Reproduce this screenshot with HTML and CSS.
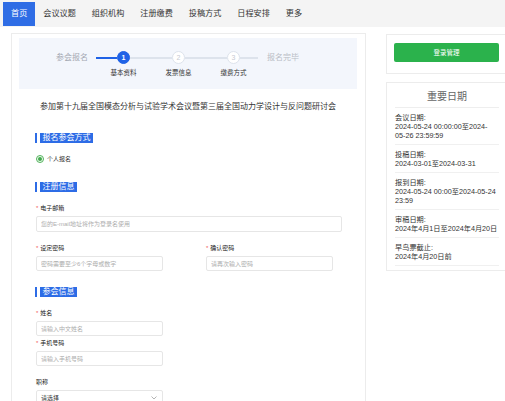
FILE: index.html
```html
<!DOCTYPE html>
<html lang="zh-CN">
<head>
    <meta charset="UTF-8">
    <meta name="viewport" content="width=device-width, initial-scale=1.0">
    <title>会议报名</title>
    <link rel="stylesheet" href="styles.css">
</head>
<body>
    <nav class="topnav">
        <a class="nav-item active" href="#">首页</a>
        <a class="nav-item" href="#">会议议题</a>
        <a class="nav-item" href="#">组织机构</a>
        <a class="nav-item" href="#">注册缴费</a>
        <a class="nav-item" href="#">投稿方式</a>
        <a class="nav-item" href="#">日程安排</a>
        <a class="nav-item" href="#">更多</a>
    </nav>

    <div class="page">
        <div class="main-card">
            <div class="steps">
                <div class="steps-track">
                    <span class="step-text">参会报名</span>
                    <span class="step-line done first"></span>
                    <span class="step-node active">1<span class="step-label">基本资料</span></span>
                    <span class="step-line mid"></span>
                    <span class="step-node">2<span class="step-label">发票信息</span></span>
                    <span class="step-line mid"></span>
                    <span class="step-node">3<span class="step-label">缴费方式</span></span>
                    <span class="step-line last"></span>
                    <span class="step-text end">报名完毕</span>
                </div>
            </div>

            <h1 class="conf-title">参加第十九届全国模态分析与试验学术会议暨第三届全国动力学设计与反问题研讨会</h1>

            <div class="form-body">
                <div class="sec-head"><span>报名参会方式</span></div>
                <label class="radio"><span class="radio-dot"></span>个人报名</label>

                <div class="sec-head sec-second"><span>注册信息</span></div>
                <div class="field first">
                    <div class="field-label"><i>*</i>电子邮箱</div>
                    <input class="text-input big" type="text" placeholder="您的E-mail地址将作为登录名使用">
                </div>
                <div class="field-row">
                    <div class="field">
                        <div class="field-label"><i>*</i>设定密码</div>
                        <input class="text-input short" type="password" placeholder="密码需要至少6个字母或数字">
                    </div>
                    <div class="field">
                        <div class="field-label"><i>*</i>确认密码</div>
                        <input class="text-input short" type="password" placeholder="请再次输入密码">
                    </div>
                </div>

                <div class="sec-head sec-third"><span>参会信息</span></div>
                <div class="field first">
                    <div class="field-label"><i>*</i>姓名</div>
                    <input class="text-input short" type="text" placeholder="请输入中文姓名">
                </div>
                <div class="field tight">
                    <div class="field-label"><i>*</i>手机号码</div>
                    <input class="text-input short" type="text" placeholder="请输入手机号码">
                </div>
                <div class="field first">
                    <div class="field-label">职称</div>
                    <div class="select-box">
                        <span>请选择</span>
                        <svg width="6" height="4" viewBox="0 0 6 4"><path d="M0.5 0.5 L3 3 L5.5 0.5" fill="none" stroke="#b4b4b4" stroke-width="1"/></svg>
                    </div>
                </div>
            </div>
        </div>

        <aside class="sidebar">
            <div class="side-card login-card">
                <a class="login-btn" href="#">登录管理</a>
            </div>
            <div class="side-card dates-card">
                <div class="dates-title">重要日期</div>
                <div class="date-item">
                    <div>会议日期:</div>
                    <div><span class="nowrap">2024-05-24</span> 00:00:00至2024-<wbr><span class="nowrap">05-26</span> 23:59:59</div>
                </div>
                <div class="date-item">
                    <div>投稿日期:</div>
                    <div>2024-03-01至2024-03-31</div>
                </div>
                <div class="date-item">
                    <div>报到日期:</div>
                    <div>2024-05-24 00:00至<span class="nowrap">2024-05-24</span> 23:59</div>
                </div>
                <div class="date-item">
                    <div>审稿日期:</div>
                    <div class="nowrap">2024年4月1日至2024年4月20日</div>
                </div>
                <div class="date-item">
                    <div>早鸟票截止:</div>
                    <div>2024年4月20日前</div>
                </div>
            </div>
        </aside>
    </div>
</body>
</html>
```

FILE: styles.css
```css
* {
    box-sizing: border-box;
}

html, body {
    margin: 0;
    padding: 0;
    width: 505px;
    height: 401px;
    overflow: hidden;
    background-color: #fff;
    font-family: "Liberation Sans", "Noto Sans CJK SC", sans-serif;
    color: #333;
}

/* top navigation */
.topnav {
    display: flex;
    height: 27px;
    padding: 2px 3px 0;
    background-color: #f4f4f4;
}

.nav-item {
    padding: 0 8px;
    height: 24px;
    line-height: 24px;
    font-size: 8.15px;
    color: #333;
    text-decoration: none;
}

.nav-item.active {
    background-color: #2f6de5;
    color: #fff;
}

.page {
    display: flex;
    align-items: flex-start;
    gap: 20px;
    padding: 6px 0 0 11px;
}

/* main registration card */
.main-card {
    flex: 0 0 355px;
    min-height: 400px;
    border: 1px solid #ececec;
    padding: 4px 8px 0 7px;
}

.steps {
    height: 51px;
    padding: 13px 0 0 37px;
    background-color: #f3f6fc;
}

.steps-track {
    display: flex;
    align-items: center;
    height: 13px;
}

.step-text {
    font-size: 8px;
    line-height: 13px;
    color: #a4a9b3;
    margin-right: 8px;
}

.step-text.end {
    margin-right: 0;
    margin-left: 9px;
    color: #b9bdc5;
}

.step-line {
    height: 2px;
    background-color: #dde3ec;
}

.step-line.done {
    background-color: #1f62e6;
}

.step-line.first { width: 21px; }
.step-line.mid { width: 42px; }
.step-line.last { width: 18px; }

.step-node {
    position: relative;
    display: flex;
    align-items: center;
    justify-content: center;
    width: 13px;
    height: 13px;
    border-radius: 50%;
    border: 1.5px solid #dde3ec;
    background-color: #fff;
    color: #c6cad2;
    font-size: 7px;
}

.step-node.active {
    background-color: #1f62e6;
    border-color: #1f62e6;
    color: #fff;
    font-weight: bold;
}

.step-label {
    position: absolute;
    top: 17px;
    left: 50%;
    transform: translateX(-50%);
    white-space: nowrap;
    font-size: 6.5px;
    line-height: 8px;
    font-weight: normal;
    color: #333;
}

.conf-title {
    margin: 12px 0 0;
    font-size: 8px;
    line-height: 12px;
    font-weight: normal;
    text-align: center;
    color: #333;
}

/* form */
.form-body {
    padding: 0 15px 20px 17px;
}

.sec-head {
    display: flex;
    width: max-content;
    margin-top: 20px;
    margin-left: -1px;
    padding-left: 3px;
    border-left: 2px solid #2d6ce6;
}

.sec-head span {
    padding: 0 2.5px;
    font-size: 8px;
    line-height: 10px;
    color: #fff;
    background-color: #2d6ce6;
}

.sec-head.sec-second { margin-top: 18px; }
.sec-head.sec-third { margin-top: 16px; }

.radio {
    display: flex;
    align-items: center;
    gap: 3px;
    margin-top: 11px;
    font-size: 6px;
    line-height: 10px;
    color: #333;
}

.radio-dot {
    display: flex;
    align-items: center;
    justify-content: center;
    width: 8px;
    height: 8px;
    border-radius: 50%;
    border: 1px solid #52b35c;
    background-color: #f1faf2;
}

.radio-dot::after {
    content: "";
    width: 4px;
    height: 4px;
    border-radius: 50%;
    background-color: #41a84c;
}

.field {
    margin-top: 11px;
}

.field.first { margin-top: 12px; }
.field.tight { margin-top: 3px; }

.field-label {
    margin-bottom: 4px;
    font-size: 6px;
    line-height: 8px;
    color: #222;
}

.field-label i {
    font-style: normal;
    color: #f05a5a;
    margin-right: 2px;
}

.field-row {
    display: grid;
    grid-template-columns: 170px 1fr;
    margin-top: 12px;
}

.field-row .field {
    margin-top: 0;
}

.text-input {
    display: block;
    height: 15px;
    padding: 0 4px;
    border: 1px solid #e6e6e6;
    border-radius: 2px;
    font-family: inherit;
    font-size: 6px;
    color: #333;
    outline: none;
}

.text-input::placeholder {
    color: #adadad;
}

.text-input.big {
    width: 100%;
    height: 16px;
}

.text-input.short {
    width: 127px;
}

.select-box {
    display: flex;
    align-items: center;
    justify-content: space-between;
    width: 127px;
    height: 15px;
    padding: 0 5px 0 4px;
    border: 1px solid #e6e6e6;
    border-radius: 2px;
    font-size: 6px;
    color: #333;
}

/* sidebar */
.sidebar {
    flex: 0 0 121px;
    margin-top: 1px;
}

.side-card {
    border: 1px solid #ececec;
    background-color: #fff;
}

.login-card {
    padding: 8px 7px 11px;
}

.login-btn {
    display: block;
    height: 19px;
    line-height: 19px;
    border-radius: 2px;
    background-color: #2bb24c;
    color: #fff;
    text-align: center;
    font-size: 6.5px;
    text-decoration: none;
}

.dates-card {
    margin-top: 8px;
    padding: 0 7px 4px 8px;
}

.dates-title {
    padding: 7px 0 3px;
    font-size: 10px;
    line-height: 14px;
    text-align: center;
    color: #666;
    border-bottom: 1px solid #eee;
}

.date-item {
    padding: 4.5px 0;
    border-bottom: 1px solid #f0f0f0;
    font-size: 7.2px;
    line-height: 9px;
    color: #333;
}

.nowrap {
    white-space: nowrap;
}
```
